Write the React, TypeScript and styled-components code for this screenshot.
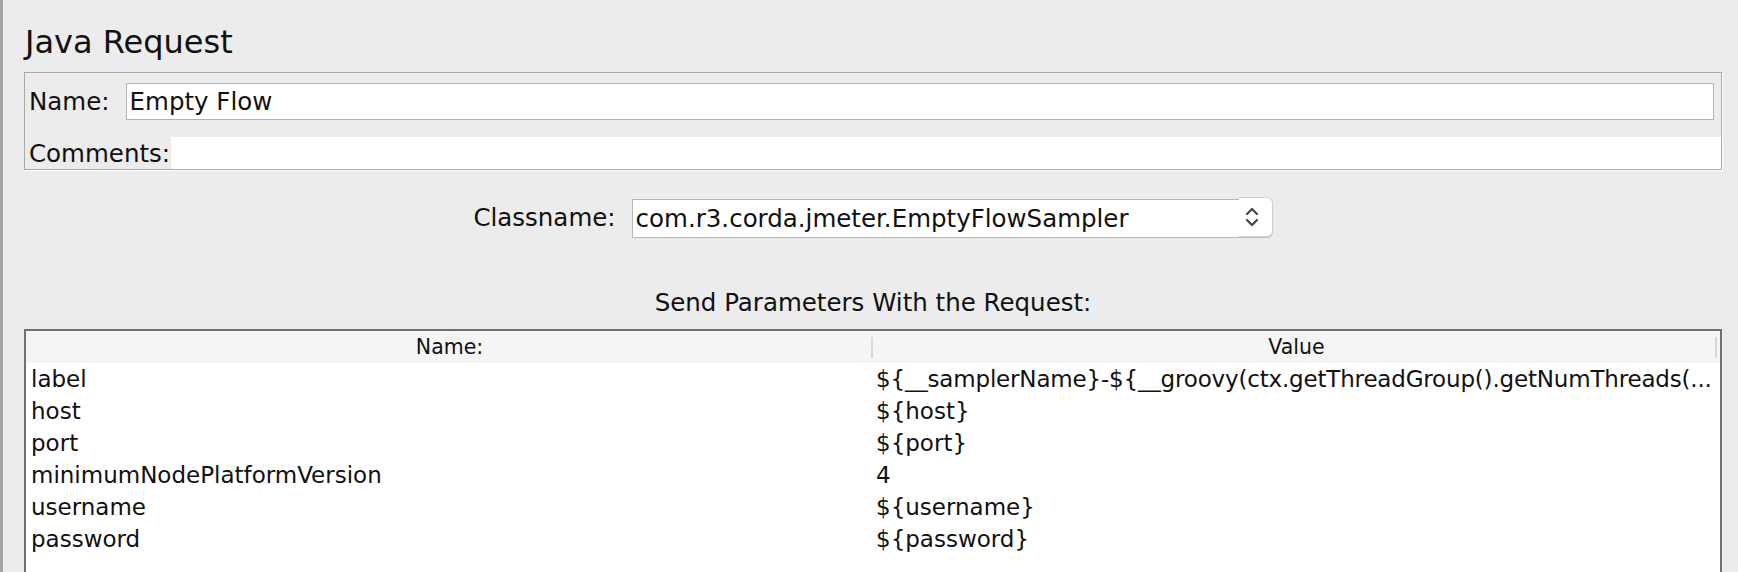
import React from "react";
import styled, { createGlobalStyle } from "styled-components";

const GlobalStyle = createGlobalStyle`
  html, body {
    margin: 0;
    padding: 0;
    background: #ececec;
  }
  body {
    font-family: "DejaVu Sans", "Liberation Sans", sans-serif;
    color: #111;
  }
`;

const Page = styled.div`
  height: 572px;
  box-sizing: border-box;
  overflow: hidden;
  display: flex;
  flex-direction: column;
  border-left: 3px solid #a4a4a4;
  padding: 0 16px 0 21px;
  background: #ececec;
`;

const Title = styled.div`
  font-size: 32px;
  line-height: 34px;
  margin-top: 25px;
  padding-left: 1px;
`;

const InfoPanel = styled.div`
  margin-top: 13px;
  border: 1px solid #a9a9a9;
  box-shadow: 1px 1px 0 #ffffff;
  display: flex;
  flex-direction: column;
  gap: 17px;
  padding-top: 10px;
`;

const InfoRow = styled.div<{ $flush?: boolean }>`
  display: flex;
  align-items: center;
  padding-left: 4px;
  padding-right: ${(p) => (p.$flush ? "0" : "7px")};
  gap: ${(p) => (p.$flush ? "1px" : "16px")};
`;

const FieldLabel = styled.span`
  font-size: 24.5px;
  white-space: nowrap;
`;

const NameInput = styled.div`
  flex: 1;
  height: 37px;
  box-sizing: border-box;
  background: #fff;
  border: 1px solid #b3b3b3;
  font-size: 24.5px;
  line-height: 35px;
  padding-left: 3px;
`;

const CommentsArea = styled.div`
  flex: 1;
  height: 32px;
  background: #fff;
`;

const ClassRow = styled.div`
  display: flex;
  justify-content: center;
  align-items: center;
  gap: 16px;
  margin-top: 27px;
`;

const Combo = styled.div`
  display: flex;
  align-items: stretch;
  height: 41px;
`;

const ComboText = styled.div`
  width: 607px;
  box-sizing: border-box;
  margin-top: 2px;
  background: #fff;
  border: 1px solid #b7b7b7;
  border-right: none;
  font-size: 24.5px;
  line-height: 37px;
  padding-left: 3px;
  white-space: nowrap;
`;

const ComboButton = styled.div`
  width: 34px;
  height: 40px;
  box-sizing: border-box;
  background: #fff;
  border: 1px solid #cfcfcf;
  border-left: none;
  border-radius: 0 6px 6px 0;
  box-shadow: 0 1px 1px rgba(0, 0, 0, 0.18);
  display: flex;
  align-items: center;
  justify-content: center;
  padding-right: 6px;
`;

const Caption = styled.div`
  margin-top: 51px;
  text-align: center;
  font-size: 24.5px;
  line-height: 28px;
`;

const TableBox = styled.div`
  flex: 1;
  margin-top: 12px;
  background: #fff;
  border: 2px solid #707070;
  border-bottom: none;
`;

const Grid = styled.table`
  width: 100%;
  border-collapse: collapse;
  table-layout: fixed;
`;

const HeadCell = styled.th<{ $last?: boolean }>`
  height: 32px;
  padding: 0;
  background: #f5f5f5;
  font-weight: normal;
  font-size: 20.5px;
  text-align: center;
  position: relative;
  &::after {
    content: "";
    position: absolute;
    right: ${(p) => (p.$last ? "3px" : "0")};
    top: 6px;
    bottom: 5px;
    width: 2px;
    background: #d8d8d8;
  }
`;

const Cell = styled.td<{ $value?: boolean; $tight?: boolean }>`
  height: 32px;
  padding: 0 0 0 ${(p) => (p.$value ? "3px" : "5px")};
  font-size: 23px;
  line-height: 32px;
  white-space: nowrap;
  overflow: hidden;
  letter-spacing: ${(p) => (p.$tight ? "-0.18px" : "normal")};
`;

const Chevrons = () => (
  <svg width="14" height="24" viewBox="0 0 14 24">
    <path d="M2 9 L7 4 L12 9" fill="none" stroke="#444" strokeWidth="2.2" strokeLinecap="round" strokeLinejoin="round" />
    <path d="M2 15 L7 20 L12 15" fill="none" stroke="#444" strokeWidth="2.2" strokeLinecap="round" strokeLinejoin="round" />
  </svg>
);

// the long value is shown already cut, as the table draws it
const params: [string, string][] = [
  ["label", "${__samplerName}-${__groovy(ctx.getThreadGroup().getNumThreads(..."],
  ["host", "${host}"],
  ["port", "${port}"],
  ["minimumNodePlatformVersion", "4"],
  ["username", "${username}"],
  ["password", "${password}"],
];

const App = () => {
  return (
    <Page>
      <GlobalStyle />
      <Title>Java Request</Title>
      <InfoPanel>
        <InfoRow>
          <FieldLabel>Name:</FieldLabel>
          <NameInput>Empty Flow</NameInput>
        </InfoRow>
        <InfoRow $flush>
          <FieldLabel>Comments:</FieldLabel>
          <CommentsArea />
        </InfoRow>
      </InfoPanel>

      <ClassRow>
        <FieldLabel>Classname:</FieldLabel>
        <Combo>
          <ComboText>com.r3.corda.jmeter.EmptyFlowSampler</ComboText>
          <ComboButton>
            <Chevrons />
          </ComboButton>
        </Combo>
      </ClassRow>

      <Caption>Send Parameters With the Request:</Caption>

      <TableBox>
        <Grid>
          <thead>
            <tr>
              <HeadCell>Name:</HeadCell>
              <HeadCell $last>Value</HeadCell>
            </tr>
          </thead>
          <tbody>
            {params.map(([name, value]) => (
              <tr key={name}>
                <Cell>{name}</Cell>
                <Cell $value $tight={value.length > 40}>{value}</Cell>
              </tr>
            ))}
          </tbody>
        </Grid>
      </TableBox>
    </Page>
  );
};

export default App;
